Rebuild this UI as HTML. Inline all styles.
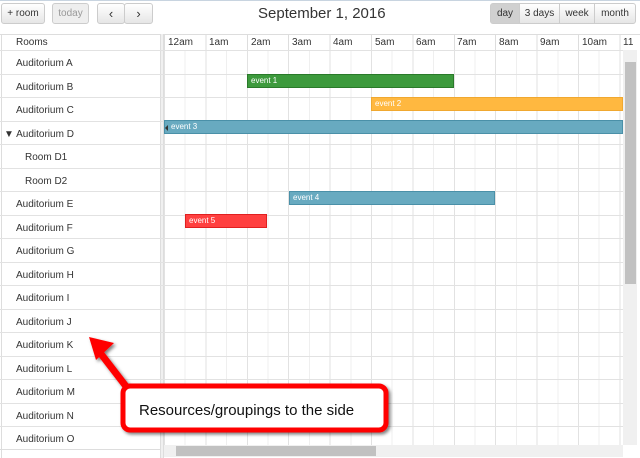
<!DOCTYPE html>
<html><head><meta charset="utf-8"><style>
*{box-sizing:border-box;margin:0;padding:0}
body{width:640px;height:458px;overflow:hidden;background:#fff;font-family:"Liberation Sans",sans-serif;color:#333;position:relative}
.btn{position:absolute;top:3px;height:21px;border:1px solid #ccc;border-radius:3px;background:linear-gradient(#fff,#e6e6e6);font-size:10px;line-height:19px;text-align:center;color:#333}
.abs{position:absolute}
.row{position:absolute;left:0;width:623px;border-top:1px solid #e2e2e2;height:24px}
.rl{position:absolute;left:16px;font-size:10px;color:#333}
.hdr{position:absolute;top:37px;font-size:10px}
.ev{position:absolute;height:14px;font-size:8px;color:#fff;line-height:12px;padding-left:3px;border:1px solid}
</style></head><body>
<div class="abs" style="left:0;top:0;width:640px;height:1px;background:#c8d4e0"></div>
<div class="btn" style="left:1px;width:44px">+ room</div>
<div class="btn" style="left:52px;width:37px;color:#999;background:#eee">today</div>
<div class="btn" style="left:97px;width:28px;font-size:13px">&#8249;</div>
<div class="btn" style="left:124px;width:29px;font-size:13px">&#8250;</div>
<div class="abs" style="left:258px;top:5px;font-size:15px;color:#333">September 1, 2016</div>
<div class="btn" style="left:490px;width:30px;background:#d0d0d0;border-radius:3px 0 0 3px">day</div>
<div class="btn" style="left:519px;width:41px;border-radius:0">3 days</div>
<div class="btn" style="left:559px;width:36px;border-radius:0">week</div>
<div class="btn" style="left:594px;width:42px;border-radius:0 3px 3px 0">month</div>

<div class="abs" style="left:0;top:34px;width:640px;height:1px;background:#ddd"></div>
<div class="abs" style="left:1px;top:34px;width:1px;height:424px;background:#ddd"></div>
<div class="abs" style="left:164px;top:50px;width:459px;height:395px;background:repeating-linear-gradient(90deg,#e2e2e2 0 1px,transparent 1px 20.7px,#efefef 20.7px 21.7px,transparent 21.7px 41.4px)"></div>
<div class="abs" style="left:164px;top:34px;width:476px;height:16px;background:repeating-linear-gradient(90deg,#ddd 0 1px,transparent 1px 41.4px)"></div>
<div class="abs" style="left:160px;top:34px;width:4px;height:424px;border-left:1px solid #ddd;border-right:1px solid #ddd;background:#f0f0f0"></div>
<div class="abs" style="left:16px;top:37px;font-size:10px">Rooms</div>
<div class="hdr" style="left:168px">12am</div><div class="hdr" style="left:209px">1am</div><div class="hdr" style="left:251px">2am</div><div class="hdr" style="left:292px">3am</div><div class="hdr" style="left:333px">4am</div><div class="hdr" style="left:375px">5am</div><div class="hdr" style="left:416px">6am</div><div class="hdr" style="left:457px">7am</div><div class="hdr" style="left:499px">8am</div><div class="hdr" style="left:540px">9am</div><div class="hdr" style="left:582px">10am</div><div class="hdr" style="left:623px">11</div>

<div class="row" style="top:50px"><span class="rl" style="top:7px">Auditorium A</span></div>
<div class="row" style="top:73.5px"><span class="rl" style="top:7px">Auditorium B</span></div>
<div class="row" style="top:97px"><span class="rl" style="top:7px">Auditorium C</span></div>
<div class="row" style="top:120.5px"><span class="rl" style="top:7px;left:4px">&#9660; Auditorium D</span></div>
<div class="row" style="top:144px"><span class="rl" style="top:7px;left:25px">Room D1</span></div>
<div class="row" style="top:167.5px"><span class="rl" style="top:7px;left:25px">Room D2</span></div>
<div class="row" style="top:191px"><span class="rl" style="top:7px">Auditorium E</span></div>
<div class="row" style="top:214.5px"><span class="rl" style="top:7px">Auditorium F</span></div>
<div class="row" style="top:238px"><span class="rl" style="top:7px">Auditorium G</span></div>
<div class="row" style="top:261.5px"><span class="rl" style="top:7px">Auditorium H</span></div>
<div class="row" style="top:285px"><span class="rl" style="top:7px">Auditorium I</span></div>
<div class="row" style="top:308.5px"><span class="rl" style="top:7px">Auditorium J</span></div>
<div class="row" style="top:332px"><span class="rl" style="top:7px">Auditorium K</span></div>
<div class="row" style="top:355.5px"><span class="rl" style="top:7px">Auditorium L</span></div>
<div class="row" style="top:379px"><span class="rl" style="top:7px">Auditorium M</span></div>
<div class="row" style="top:402.5px"><span class="rl" style="top:7px">Auditorium N</span></div>
<div class="row" style="top:426px"><span class="rl" style="top:7px">Auditorium O</span></div>
<div class="abs" style="left:0;top:449px;width:160px;height:1px;background:#ddd"></div>

<div class="ev" style="left:247px;top:74px;width:207px;background:#3d9a3d;border-color:#2a7a2a">event 1</div>
<div class="ev" style="left:371px;top:97px;width:252px;background:#ffb840;border-color:#f0a830">event 2</div>
<div class="ev" style="left:164px;top:120px;width:459px;background:#68aac0;border-color:#4a90a8;padding-left:6px">event 3</div>
<div class="abs" style="left:165px;top:125px;width:0;height:0;border-top:3px solid transparent;border-bottom:3px solid transparent;border-right:3px solid #333"></div>
<div class="ev" style="left:289px;top:191px;width:206px;background:#68aac0;border-color:#4a90a8">event 4</div>
<div class="ev" style="left:185px;top:214px;width:82px;background:#ff4040;border-color:#e02020">event 5</div>

<div class="abs" style="left:623px;top:50px;width:14px;height:395px;background:#f0f0f0"></div>
<div class="abs" style="left:625px;top:62px;width:11px;height:222px;background:#c1c1c1"></div>
<div class="abs" style="left:164px;top:445px;width:459px;height:12px;background:#f0f0f0"></div>
<div class="abs" style="left:176px;top:446px;width:200px;height:10px;background:#c1c1c1"></div>

<svg class="abs" style="left:0;top:0" width="640" height="458">
<defs><filter id="s"><feDropShadow dx="2" dy="2" stdDeviation="1.5" flood-opacity="0.5"/></filter></defs>
<g filter="url(#s)">
<line x1="98" y1="350" x2="135" y2="398" stroke="#f00" stroke-width="7"/>
<polygon points="89,337 114,343 96,360" fill="#f00"/>
<rect x="123" y="386" width="263" height="44" rx="7" fill="#fff" stroke="#f00" stroke-width="5"/>
</g>
<text x="139" y="415" font-family="Liberation Sans, sans-serif" font-size="15" fill="#111">Resources/groupings to the side</text>
</svg>
</body></html>
